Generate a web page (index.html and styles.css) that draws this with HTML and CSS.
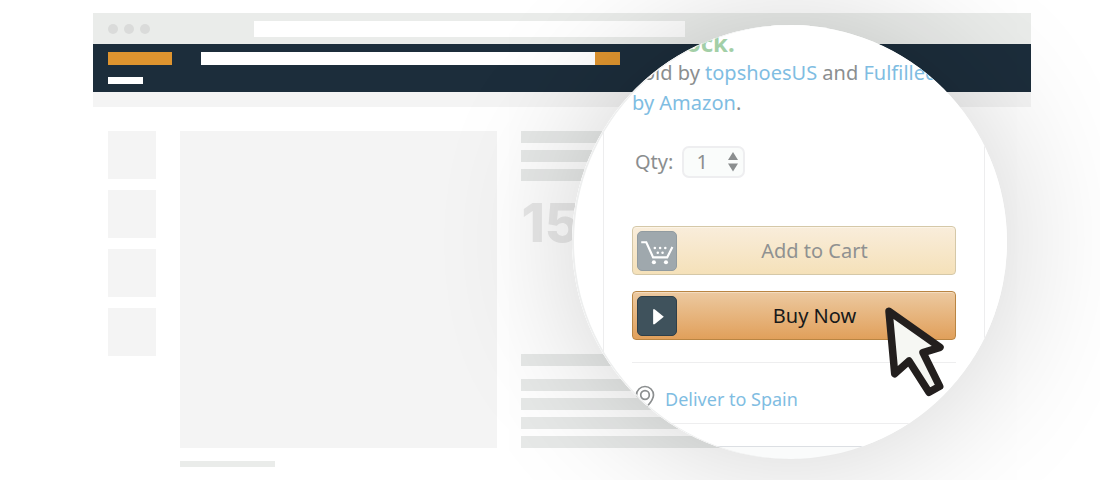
FILE: index.html
```html
<!DOCTYPE html>
<html lang="en">
<head>
<meta charset="utf-8">
<title>Buy Now</title>
<link rel="stylesheet" href="styles.css">
</head>
<body>
<main class="scene">
  <div class="browser">
    <div class="chrome">
      <span class="dot"></span><span class="dot"></span><span class="dot"></span>
      <div class="address"></div>
    </div>
    <div class="nav">
      <div class="brand">
        <div class="logo"></div>
        <div class="location"></div>
      </div>
      <div class="search"><div class="search-go"></div></div>
    </div>
    <div class="subnav"></div>
    <div class="product">
      <div class="thumbs">
        <div class="thumb"></div><div class="thumb"></div><div class="thumb"></div><div class="thumb"></div>
      </div>
      <div class="gallery">
        <div class="photo"></div>
        <div class="caption"></div>
      </div>
      <div class="details">
        <div class="lines"><div class="line"></div><div class="line"></div><div class="line"></div></div>
        <div class="price">15</div>
        <div class="lines lines-end">
          <div class="line line-head"></div><div class="line"></div><div class="line"></div><div class="line"></div><div class="line"></div>
        </div>
      </div>
    </div>
  </div>

  <section class="lens">
    <div class="card">
      <p class="stock">In stock.</p>
      <p class="seller">Sold by <a href="#">topshoesUS</a> and <a href="#">Fulfilled<br>by Amazon</a>.</p>
      <div class="quantity">
        <label for="qty">Qty:</label>
        <div class="picker">
          <select id="qty"><option>1</option><option>2</option></select>
          <svg class="arrows" width="10" height="20" viewBox="0 0 10 20" aria-hidden="true"><path d="M5 0l5 8H0zM5 19.500l5-8H0z"/></svg>
        </div>
      </div>
      <button class="buy buy-cart" type="button">
        <svg class="icon" width="40" height="40" viewBox="0 0 39 39" aria-hidden="true">
          <path class="cart-frame" d="M3.300 10.500H8.500L15.500 26H30L35.300 15.300"/>
          <g class="solid"><circle cx="16.300" cy="31" r="2.100"/><circle cx="28.700" cy="31" r="2.100"/>
          <circle cx="17.300" cy="16.500" r="1.300"/><circle cx="22.700" cy="16.500" r="1.300"/><circle cx="28" cy="16.500" r="1.300"/><circle cx="20.300" cy="21.300" r="1.300"/><circle cx="25.200" cy="21.300" r="1.300"/></g>
        </svg>
        <span class="buy-label">Add to Cart</span>
      </button>
      <button class="buy buy-now" type="button">
        <svg class="icon" width="40" height="40" viewBox="0 0 39 39" aria-hidden="true"><path class="solid" d="M15.500 12.500h1.500L26.500 20.300 17 28h-1.500z"/></svg>
        <span class="buy-label">Buy Now</span>
      </button>
      <div class="deliver">
        <svg class="pin" width="20" height="26" viewBox="0 0 20 26" aria-hidden="true"><path d="M10 24C6 19 1.500 15.500 1.500 10a8.500 8.500 0 0 1 17 0C18.500 15.500 14 19 10 24z"/><circle cx="10" cy="10" r="4.300"/></svg>
        <a href="#">Deliver to Spain</a>
      </div>
    </div>
  </section>

  <svg class="cursor" width="62" height="92" viewBox="0 0 62 92" aria-hidden="true"><path d="M5 5.300L56 41.300 39 46.600 55.700 80.300 45 86.300 25 55 10.700 67.700z"/></svg>
</main>
</body>
</html>
```
FILE: styles.css
```css
* { box-sizing: border-box; }

body {
  margin: 0;
  background: #fff;
  font-family: "Noto Sans", "Open Sans", sans-serif;
  font-size: 20px;
  line-height: 30px;
  color: #8b8e8f;
}

.scene {
  position: relative;
  min-height: 480px;
  padding: 13px 69px 12px 93px;
  overflow: hidden;
}

/* Browser mock-up */
.chrome {
  display: flex;
  align-items: center;
  gap: 6px;
  height: 31px;
  padding: 0 15px;
  background: #eaecea;
}
.dot { width: 10px; height: 10px; border-radius: 50%; background: #dadbda; }
.address { width: 431px; height: 16px; margin-left: 98px; background: #fff; }

.nav {
  display: flex;
  gap: 29px;
  height: 48px;
  padding: 8px 15px;
  background: #1c2d3b;
}
.brand { width: 64px; }
.logo { height: 13px; background: #de942f; }
.location { width: 35px; height: 7px; margin-top: 12px; background: #fff; }
.search {
  display: flex;
  justify-content: flex-end;
  width: 419px;
  height: 13px;
  background: #fff;
}
.search-go { width: 25px; background: #de942f; }
.subnav { height: 15px; background: #f4f4f4; }

.product {
  display: grid;
  grid-template-columns: 48px 317fr 509fr;
  column-gap: 24px;
  padding: 24px 0 0 15px;
}
.thumbs { display: flex; flex-direction: column; gap: 11px; }
.thumb { height: 48px; background: #f4f4f4; }
.photo { height: 317px; background: #f4f4f4; }
.caption { width: 95px; height: 6px; margin-top: 13px; background: #eaecea; }
.details { display: flex; flex-direction: column; height: 317px; }
.lines { display: flex; flex-direction: column; gap: 7px; width: 240px; }
.line { height: 12px; background: #e7e9e8; }
.line-head { margin-bottom: 6px; }
.lines-end { margin-top: auto; }
.price {
  margin-top: 12px;
  font: 800 53px/60px Inter, sans-serif;
  color: #e9e9e9;
}

/* Magnified buy box */
.lens {
  position: absolute;
  top: 25px;
  right: 93px;
  width: 435px;
  height: 434px;
  overflow: hidden;
  border-radius: 50%;
  background: #fafbfb;
  box-shadow: 0 0 140px rgba(0, 0, 0, 0.19);
}
.lens::after {
  content: "";
  position: absolute;
  inset: 0;
  border-radius: 50%;
  box-shadow: inset 2px 0 0 #eeefef;
  pointer-events: none;
}
.card {
  min-height: 422px;
  padding: 3px 28px 22px;
  border: 1px solid #ededee;
  border-width: 0 1px 1px;
  border-bottom-color: #dcdfe3;
  margin: 0 22px 0 31px;
  background: #fff;
  box-shadow: -40px 0 0 #fff, 40px 0 0 #fff;
}
p { margin: 0; }
a { color: #7fbde2; text-decoration: none; }
.stock { font-size: 24px; font-weight: 700; color: #a3cfa7; }

.quantity {
  display: flex;
  align-items: center;
  gap: 9px;
  margin: 28px 0 48px;
  padding-left: 3px;
}
.picker { position: relative; }
select {
  display: block;
  width: 63px;
  height: 32px;
  padding: 0 12px;
  border: 2px solid #eeeef0;
  border-radius: 7px;
  background: #fafcfb;
  font: inherit;
  line-height: 28px;
  color: inherit;
  appearance: none;
}
.arrows {
  position: absolute;
  top: 6px;
  right: 7px;
  fill: #8b8e8f;
  pointer-events: none;
}

.buy {
  display: flex;
  align-items: center;
  width: 100%;
  height: 49px;
  margin-bottom: 16px;
  padding: 0 3px 0 4px;
  border: 1px solid;
  border-radius: 4px;
  font: inherit;
}
.buy-label { flex: 1; }
.buy-cart {
  border-color: #d5c8a8;
  background: linear-gradient(#f9eddb, #f5e1b9);
  box-shadow: inset 0 1px 0 #fcf4e6;
  color: #8f9191;
}
.buy-now {
  margin-bottom: 22px;
  border-color: #b98543;
  background: linear-gradient(#ecc9a0, #e1a05b);
  box-shadow: inset 0 1px 0 #f4dcc0;
  color: #17191a;
}
.icon { border: 1px solid #919ba0; border-radius: 5px; background: #9fa8ad; }
.buy-now .icon { border-color: #2e3f49; background: #3f525c; }
.solid { fill: #fff; }
.cart-frame { fill: none; stroke: #fff; stroke-width: 2.2; }

.deliver {
  display: flex;
  align-items: center;
  gap: 10px;
  height: 62px;
  padding: 12px 3px 0;
  border: 1px solid #eeeeef;
  border-width: 1px 0;
  font-size: 18px;
}
.pin { margin-top: -3px; fill: none; stroke: #8b8e8f; stroke-width: 1.7; }

.cursor {
  position: absolute;
  top: 306px;
  right: 154px;
  fill: #f6f7f3;
  stroke: #231f1e;
  stroke-width: 7.5;
  stroke-linejoin: round;
}
```
